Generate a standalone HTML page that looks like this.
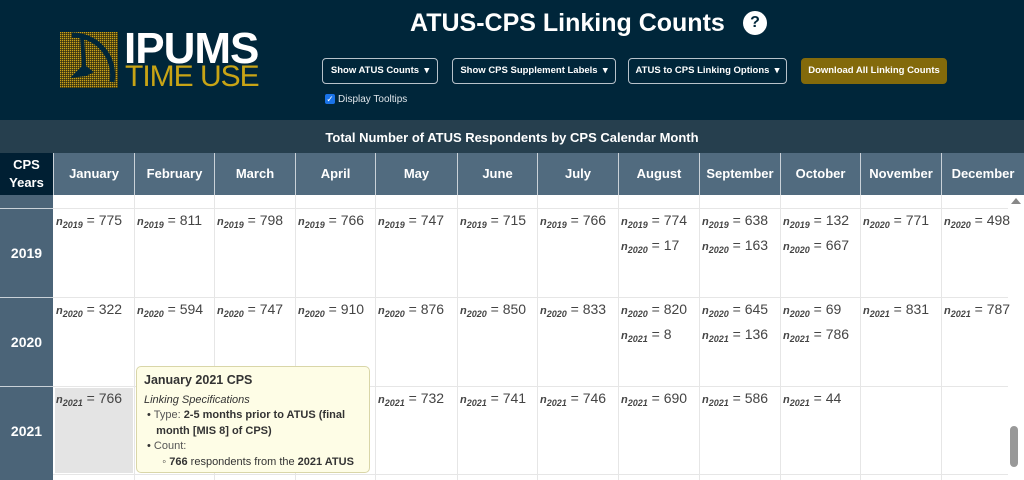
<!DOCTYPE html>
<html><head><meta charset="utf-8"><style>
*{margin:0;padding:0;box-sizing:border-box}
body{width:1024px;height:480px;overflow:hidden;font-family:"Liberation Sans",sans-serif;background:#fff;position:relative}
.hdr{position:absolute;left:0;top:0;width:1024px;height:120px;background:#00263a}
.sub{position:absolute;left:0;top:120px;width:1024px;height:33px;background:#263f4e;color:#fff;font-weight:bold;font-size:13px;text-align:center;line-height:36px}
.btn{position:absolute;top:58px;height:26px;border:1px solid #b8c2ca;border-radius:4px;color:#fff;font-size:9.5px;font-weight:bold;line-height:24px;text-align:center}
.th{position:absolute;top:153px;height:42px;background:#516b7f;color:#fff;font-weight:bold;font-size:13px;text-align:center;line-height:42px;border-left:1px solid #c9d1d8}
.yr{position:absolute;left:0;width:53px;background:#4b6478;color:#fff;font-weight:bold;font-size:14px;text-align:center;border-top:1px solid #c9d1d8}
.c{position:absolute;font-size:14px;color:#444;white-space:nowrap;line-height:23px}
.c i{font-weight:bold;font-size:11px}
.c sub{font-size:9px;font-weight:bold;font-style:italic;vertical-align:-3px;line-height:0}
.vl{position:absolute;top:195px;width:1px;height:285px;background:#e6e6e6}
.hl{position:absolute;left:53px;width:955px;height:1px;background:#e6e6e6}
</style></head><body>
<div class="hdr">
<svg style="position:absolute;left:60px;top:32px" width="58" height="56" viewBox="0 0 58 56">
<defs><pattern id="p" width="2" height="2" patternUnits="userSpaceOnUse"><rect width="2" height="2" fill="#2a2a10"/><rect width="1.3" height="1.3" fill="#c9a21a"/></pattern></defs>
<rect width="58" height="56" fill="url(#p)"/>
<path d="M12 3 A40 40 0 0 1 52 50" fill="none" stroke="#00263a" stroke-width="5"/>
<path d="M20 5 L22 34 L10 46 L26 44 L34 40 L26 34 L24 5 Z" fill="#00263a"/>
</svg>
<div style="position:absolute;left:124px;top:24px;color:#fff;font-weight:bold;font-size:44px;letter-spacing:-1px">IPUMS</div>
<div style="position:absolute;left:125px;top:60px;color:#c8a415;font-size:30px;letter-spacing:-1px">TIME USE</div>
<div style="position:absolute;left:410px;top:9px;color:#fff;font-weight:bold;font-size:25px">ATUS-CPS Linking Counts</div>
<div style="position:absolute;left:743px;top:11px;width:24px;height:24px;border-radius:50%;background:#fff;color:#00263a;font-weight:bold;font-size:16px;text-align:center;line-height:24px">?</div>
<div class="btn" style="left:322px;width:116px">Show ATUS Counts &nbsp;▾</div>
<div class="btn" style="left:452px;width:164px">Show CPS Supplement Labels &nbsp;▾</div>
<div class="btn" style="left:628px;width:159px">ATUS to CPS Linking Options &nbsp;▾</div>
<div class="btn" style="left:801px;width:146px;background:#836a0b;border-color:#836a0b">Download All Linking Counts</div>
<div style="position:absolute;left:325px;top:94px;width:10px;height:10px;background:#1a73e8;border-radius:2px;color:#fff;font-size:9px;line-height:10px;text-align:center">✓</div>
<div style="position:absolute;left:338px;top:94px;color:#dfe5ea;font-size:10px">Display Tooltips</div>
</div>
<div class="sub">Total Number of ATUS Respondents by CPS Calendar Month</div>
<div class="th" style="left:0;width:53px;background:#001f33;border:none;line-height:18px;padding-top:3px">CPS<br>Years</div>
<div class="th" style="left:53px;width:81px">January</div>
<div class="th" style="left:134px;width:80px">February</div>
<div class="th" style="left:214px;width:81px">March</div>
<div class="th" style="left:295px;width:80px">April</div>
<div class="th" style="left:375px;width:82px">May</div>
<div class="th" style="left:457px;width:80px">June</div>
<div class="th" style="left:537px;width:81px">July</div>
<div class="th" style="left:618px;width:81px">August</div>
<div class="th" style="left:699px;width:81px">September</div>
<div class="th" style="left:780px;width:80px">October</div>
<div class="th" style="left:860px;width:81px">November</div>
<div class="th" style="left:941px;width:83px">December</div>
<div class="yr" style="top:195px;height:13px;border:none"></div>
<div class="yr" style="top:208px;height:89px;line-height:89px">2019</div>
<div class="yr" style="top:297px;height:89px;line-height:89px">2020</div>
<div class="yr" style="top:386px;height:94px;line-height:89px">2021</div>
<div class="vl" style="left:134px"></div><div class="vl" style="left:214px"></div><div class="vl" style="left:295px"></div><div class="vl" style="left:375px"></div><div class="vl" style="left:457px"></div><div class="vl" style="left:537px"></div><div class="vl" style="left:618px"></div><div class="vl" style="left:699px"></div><div class="vl" style="left:780px"></div><div class="vl" style="left:860px"></div><div class="vl" style="left:941px"></div>
<div class="hl" style="top:208px"></div><div class="hl" style="top:297px"></div><div class="hl" style="top:386px"></div><div class="hl" style="top:474px"></div>
<div style="position:absolute;left:55px;top:388px;width:78px;height:85px;background:#e4e4e4"></div>
<div style="position:absolute;left:1008px;top:195px;width:16px;height:285px;background:#fff"></div>
<div style="position:absolute;left:1011px;top:198px;width:0;height:0;border-left:5px solid transparent;border-right:5px solid transparent;border-bottom:6px solid #888"></div>
<div style="position:absolute;left:1010px;top:426px;width:8px;height:41px;background:#999;border-radius:4px"></div>

<div class="c" style="left:56px;top:209px"><i>n<sub>2019</sub></i> = 775</div>
<div class="c" style="left:137px;top:209px"><i>n<sub>2019</sub></i> = 811</div>
<div class="c" style="left:217px;top:209px"><i>n<sub>2019</sub></i> = 798</div>
<div class="c" style="left:298px;top:209px"><i>n<sub>2019</sub></i> = 766</div>
<div class="c" style="left:378px;top:209px"><i>n<sub>2019</sub></i> = 747</div>
<div class="c" style="left:460px;top:209px"><i>n<sub>2019</sub></i> = 715</div>
<div class="c" style="left:540px;top:209px"><i>n<sub>2019</sub></i> = 766</div>
<div class="c" style="left:621px;top:209px"><i>n<sub>2019</sub></i> = 774<br><i>n<sub>2020</sub></i> = 17</div>
<div class="c" style="left:702px;top:209px"><i>n<sub>2019</sub></i> = 638<br><i>n<sub>2020</sub></i> = 163</div>
<div class="c" style="left:783px;top:209px"><i>n<sub>2019</sub></i> = 132<br><i>n<sub>2020</sub></i> = 667</div>
<div class="c" style="left:863px;top:209px"><i>n<sub>2020</sub></i> = 771</div>
<div class="c" style="left:944px;top:209px"><i>n<sub>2020</sub></i> = 498</div>

<div class="c" style="left:56px;top:298px"><i>n<sub>2020</sub></i> = 322</div>
<div class="c" style="left:137px;top:298px"><i>n<sub>2020</sub></i> = 594</div>
<div class="c" style="left:217px;top:298px"><i>n<sub>2020</sub></i> = 747</div>
<div class="c" style="left:298px;top:298px"><i>n<sub>2020</sub></i> = 910</div>
<div class="c" style="left:378px;top:298px"><i>n<sub>2020</sub></i> = 876</div>
<div class="c" style="left:460px;top:298px"><i>n<sub>2020</sub></i> = 850</div>
<div class="c" style="left:540px;top:298px"><i>n<sub>2020</sub></i> = 833</div>
<div class="c" style="left:621px;top:298px"><i>n<sub>2020</sub></i> = 820<br><i>n<sub>2021</sub></i> = 8</div>
<div class="c" style="left:702px;top:298px"><i>n<sub>2020</sub></i> = 645<br><i>n<sub>2021</sub></i> = 136</div>
<div class="c" style="left:783px;top:298px"><i>n<sub>2020</sub></i> = 69<br><i>n<sub>2021</sub></i> = 786</div>
<div class="c" style="left:863px;top:298px"><i>n<sub>2021</sub></i> = 831</div>
<div class="c" style="left:944px;top:298px"><i>n<sub>2021</sub></i> = 787</div>

<div class="c" style="left:56px;top:387px"><i>n<sub>2021</sub></i> = 766</div>
<div class="c" style="left:378px;top:387px"><i>n<sub>2021</sub></i> = 732</div>
<div class="c" style="left:460px;top:387px"><i>n<sub>2021</sub></i> = 741</div>
<div class="c" style="left:540px;top:387px"><i>n<sub>2021</sub></i> = 746</div>
<div class="c" style="left:621px;top:387px"><i>n<sub>2021</sub></i> = 690</div>
<div class="c" style="left:702px;top:387px"><i>n<sub>2021</sub></i> = 586</div>
<div class="c" style="left:783px;top:387px"><i>n<sub>2021</sub></i> = 44</div>

<div style="position:absolute;left:136px;top:366px;width:234px;height:107px;background:#fefde6;border:1px solid #d9d6a8;border-radius:5px;color:#333;font-size:11px;padding:6px 7px">
<div style="font-weight:bold;font-size:12.5px;margin-bottom:5px">January 2021 CPS</div>
<div style="font-style:italic;line-height:16px">Linking Specifications</div>
<div style="padding-left:3px;line-height:15.5px">• <span style="color:#555">Type:</span> <b>2-5 months prior to ATUS (final<br>&nbsp;&nbsp;&nbsp;month [MIS 8] of CPS)</b><br>• <span style="color:#555">Count:</span><br>&nbsp;&nbsp;&nbsp;&nbsp;&nbsp;◦ <b>766</b> respondents from the <b>2021 ATUS</b></div>
</div>
</body></html>
